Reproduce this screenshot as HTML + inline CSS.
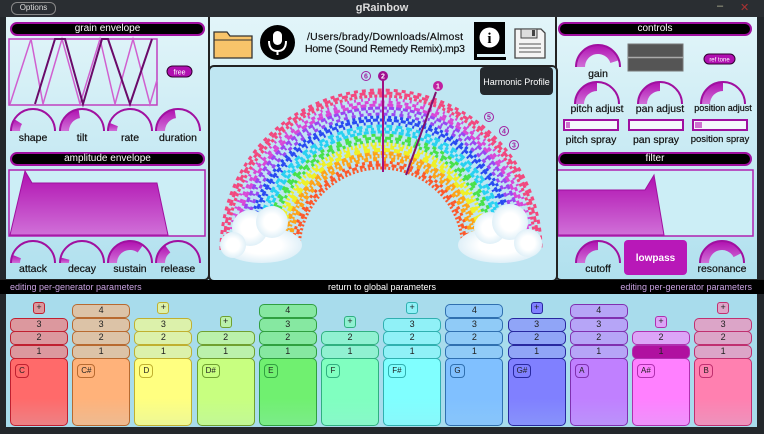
<!DOCTYPE html><html><head><meta charset="utf-8"><style>
*{margin:0;padding:0;box-sizing:border-box}
body{width:764px;height:434px;background:#23272b;font-family:"Liberation Sans",sans-serif;position:relative;overflow:hidden}
.abs{position:absolute}
.main{left:6px;top:17px;width:751px;height:263px;background:linear-gradient(#e2f5f9,#b0e0ee)}
.hdr{position:absolute;height:14px;background:#000;border:2px solid #a010a0;border-radius:7px;color:#fff;font-size:10px;text-align:center;line-height:10px}
.lbl{position:absolute;font-size:10.5px;color:#111;text-align:center;width:80px;white-space:nowrap;-webkit-text-stroke:0.2px #111}
.key{position:absolute;border-radius:5px;border:1.5px solid}
.row{position:absolute;border-radius:5px;border:1.5px solid;font-size:9px;text-align:center;line-height:11px;color:#222}
.nm{position:absolute;left:4px;top:5px;border:1.5px solid;border-radius:4px;font-size:8px;padding:0 3px;height:14px;line-height:11px;min-width:14px;text-align:center;color:#222}
.pl{position:absolute;width:12px;height:12px;border:1.5px solid;border-radius:3px;font-size:9px;line-height:9px;text-align:center;color:#222}
</style></head><body>
<div class="abs" style="left:0;top:0;width:764px;height:17px;background:#2a2e32"></div>
<div class="abs" style="left:11px;top:2px;width:45px;height:13px;border:1.5px solid #888;border-radius:6px;color:#ddd;font-size:8px;line-height:10px;text-align:center">Options</div>
<div class="abs" style="left:0;width:764px;top:2px;text-align:center;color:#ddd;font-size:11px;font-weight:bold">gRainbow</div>
<div class="abs" style="left:717px;top:0;color:#bb9;font-size:11px">–</div>
<div class="abs" style="left:740px;top:1px;color:#a33;font-size:11px">✕</div>
<div class="abs main"></div>
<div class="abs" style="left:0;top:17px;width:210px;height:264px;border-right:2px solid #222;border-bottom:2px solid #222;border-radius:0 0 6px 0"></div>
<div class="abs" style="left:555px;top:17px;width:209px;height:264px;border-left:2px solid #222;border-bottom:2px solid #222;border-radius:0 0 0 6px"></div>
<div class="hdr" style="left:10px;top:22px;width:195px">grain envelope</div>
<div class="hdr" style="left:10px;top:152px;width:195px">amplitude envelope</div>
<div class="hdr" style="left:558px;top:22px;width:194px">controls</div>
<div class="hdr" style="left:558px;top:152px;width:194px">filter</div>
<svg class="abs" style="left:0;top:0" width="764" height="434">
<defs>
<linearGradient id="mg" x1="0" y1="0" x2="0" y2="1"><stop offset="0" stop-color="#b010b0"/><stop offset="1" stop-color="#d070d8"/></linearGradient>
<radialGradient id="cl"><stop offset="0.5" stop-color="#fff"/><stop offset="1" stop-color="#e0f0f8"/></radialGradient>
</defs>
<rect x="9" y="39" width="148" height="66" fill="none" stroke="#c040c0" stroke-width="1.5"/>
<g fill="none" stroke-width="1.5">
<path d="M10 104 L31 39 L43 104 L62 39 L80 104 L100 39 L115 104 L133 39 L150 104 L157 80" stroke="#d060d0"/>
<path d="M35 104 L55 39 L65 39 L83 104 L102 39 L108 39 L130 104 L152 39" stroke="#6a0a6a" stroke-width="2"/>
</g>
<rect x="167" y="66" width="25" height="11" rx="5.5" fill="#b010b0" stroke="#300030"/>
<text x="179.5" y="74.5" font-size="7" fill="#fff" text-anchor="middle" font-family="Liberation Sans">free</text>
<rect x="9" y="170" width="196" height="66" fill="#cceef6" stroke="#b020b0" stroke-width="1.5"/>
<path d="M10 235 L25 171 L32 183 L157 183 L168 235 Z" fill="url(#mg)" stroke="#a010a0"/>
<rect x="557" y="170" width="196" height="66" fill="#cceef6" stroke="#b020b0" stroke-width="1.5"/>
<path d="M558 235 L558 190 L645 190 L654 175 L664 235 Z" fill="url(#mg)" stroke="#a010a0"/>
<rect x="628" y="44" width="55" height="27" fill="#555" stroke="#777"/>
<line x1="628" y1="57.5" x2="683" y2="57.5" stroke="#aaa" stroke-width="1.5"/>
<rect x="704" y="54" width="31" height="10" rx="5" fill="#b010b0" stroke="#300030"/>
<text x="719.5" y="61.5" font-size="6" fill="#fff" text-anchor="middle" font-family="Liberation Sans">ref tone</text>
<g fill="#f4f8fb" stroke="#a010a0" stroke-width="2">
<rect x="564" y="120" width="54" height="10"/><rect x="629" y="120" width="54" height="10"/><rect x="693" y="120" width="54" height="10"/>
</g>
<rect x="566" y="122" width="4" height="6" fill="#d070d0"/><rect x="695" y="122" width="7" height="6" fill="#d070d0"/>
<rect x="624" y="240" width="63" height="35" rx="4" fill="#b818b8"/>
<text x="655.5" y="261" font-size="10" fill="#fff" text-anchor="middle" font-weight="bold" font-family="Liberation Sans">lowpass</text>
<g id="knobs"></g>
<path d="M214 32 h13 l3 4 h22 v22 h-38 z" fill="#f8c46a" stroke="#333" stroke-width="1.3"/>
<line x1="214" y1="40" x2="252" y2="40" stroke="#333" stroke-width="1"/>
<circle cx="277.5" cy="42.5" r="17.5" fill="#000"/>
<rect x="273" y="31" width="9" height="14" rx="4.5" fill="#fff"/>
<path d="M269 41 q0 10 8.5 10 q8.5 0 8.5-10" fill="none" stroke="#fff" stroke-width="2"/>
<line x1="277.5" y1="51" x2="277.5" y2="55" stroke="#fff" stroke-width="2"/>
<text x="385" y="40" font-size="10.5" text-anchor="middle" font-family="Liberation Sans" fill="#111" stroke="#111" stroke-width="0.2" textLength="156">/Users/brady/Downloads/Almost</text>
<text x="385" y="52" font-size="10.5" text-anchor="middle" font-family="Liberation Sans" fill="#111" stroke="#111" stroke-width="0.2" textLength="160">Home (Sound Remedy Remix).mp3</text>
<path d="M474 22 h31 v32 h-31 z" fill="#000"/><path d="M474 54 v6 h32 v-3 h-29 v-3" fill="#000"/>
<circle cx="489.5" cy="37.5" r="10" fill="#fff"/><text x="489.5" y="43" font-size="15" text-anchor="middle" font-weight="bold" font-family="Liberation Serif">i</text>
<path d="M515 29 h26 l4 4 v25 h-30 z" fill="#f4f4f4" stroke="#444" stroke-width="1.3"/>
<rect x="521" y="29" width="16" height="9" fill="#ddd" stroke="#444"/><rect x="532" y="30" width="3" height="6" fill="#444"/>
<g stroke="#555"><line x1="519" y1="44" x2="541" y2="44"/><line x1="519" y1="48" x2="541" y2="48"/><line x1="519" y1="52" x2="541" y2="52"/></g>
<rect x="209" y="66" width="348" height="215" rx="5" fill="#bfe6f2" stroke="#222" stroke-width="2"/>
<rect x="480" y="67" width="73" height="28" rx="4" fill="#25292d"/>
<text x="516.5" y="85" font-size="9" fill="#fff" text-anchor="middle" font-family="Liberation Sans">Harmonic Profile</text>
<g fill="none" id="rb"></g>
<g fill="url(#cl)">
<ellipse cx="262" cy="245" rx="40" ry="18"/><circle cx="250" cy="228" r="18"/><circle cx="272" cy="222" r="16"/><circle cx="233" cy="245" r="13"/>
<ellipse cx="500" cy="245" rx="42" ry="18"/><circle cx="490" cy="228" r="16"/><circle cx="510" cy="222" r="18"/><circle cx="528" cy="243" r="14"/>
</g>
<line x1="383" y1="80" x2="383" y2="172" stroke="#a01080" stroke-width="2"/>
<line x1="436" y1="92" x2="406" y2="175" stroke="#801070" stroke-width="2"/>
<g font-size="7" font-weight="bold" text-anchor="middle" font-family="Liberation Sans">
<circle cx="383" cy="76" r="5" fill="#a01090"/><text x="383" y="78.5" fill="#fff">2</text>
<circle cx="438" cy="86" r="5" fill="#c020a0"/><text x="438" y="88.5" fill="#fff">1</text>
<g fill="none" stroke="#a020a0"><circle cx="366" cy="76" r="4.5"/><circle cx="489" cy="117" r="4.5"/><circle cx="504" cy="131" r="4.5"/><circle cx="514" cy="145" r="4.5"/></g>
<g fill="#a020a0"><text x="366" y="78.5">6</text><text x="489" y="119.5">5</text><text x="504" y="133.5">4</text><text x="514" y="147.5">3</text></g>
</g>
<rect x="0" y="280" width="764" height="14" fill="#000"/>
<rect x="6" y="294" width="751" height="133" fill="#a8dcec"/>
<text x="10" y="290" font-size="9" fill="#c8a0e0" font-family="Liberation Sans">editing per-generator parameters</text>
<text x="382" y="290" font-size="9" fill="#fff" text-anchor="middle" font-family="Liberation Sans">return to global parameters</text>
<text x="752" y="290" font-size="9" fill="#c8a0e0" text-anchor="end" font-family="Liberation Sans">editing per-generator parameters</text>
</svg>
<div id="lb"></div>
<div id="keys"></div>
<script>
var k=document.getElementById('knobs'),s='';
function knob(cx,cy,v){var r=22,ri=13;function p(a,rr){return [cx+rr*Math.cos(a),cy-rr*Math.sin(a)]}
var a=Math.PI*(1-v),o=p(a,r),i=p(a,ri);
s+='<path d="M'+(cx-r)+' '+cy+' A'+r+' '+r+' 0 0 1 '+o[0]+' '+o[1]+' L'+i[0]+' '+i[1]+' A'+ri+' '+ri+' 0 0 0 '+(cx-ri)+' '+cy+' Z" fill="url(#mg)"/>';
s+='<path d="M'+(cx-r)+' '+cy+' A'+r+' '+r+' 0 0 1 '+(cx+r)+' '+cy+'" fill="none" stroke="#a010a0" stroke-width="2"/>';}
[[33,.18],[82,.45],[130,.12],[178,.45]].forEach(function(q){knob(q[0],131,q[1])});
[[33,.12],[82,.08],[130,.7],[178,.3]].forEach(function(q){knob(q[0],263,q[1])});
knob(598,67,.9);knob(597,104,.5);knob(660,104,.5);knob(723,104,.5);knob(598,263,.5);knob(722,263,.85);
k.innerHTML=s;
var L='';function lab(x,y,t,f){L+='<div class="lbl" style="left:'+(x-40)+'px;top:'+y+'px'+(f?';font-size:'+f+'px':'')+'">'+t+'</div>'}
lab(33,132,'shape');lab(82,132,'tilt');lab(130,132,'rate');lab(178,132,'duration');
lab(33,263,'attack');lab(82,263,'decay');lab(130,263,'sustain');lab(178,263,'release');
lab(598,68,'gain');lab(597,103,'pitch adjust');lab(660,103,'pan adjust');lab(723,103,'position adjust',9);
lab(591,134,'pitch spray');lab(656,134,'pan spray');lab(720,134,'position spray',9.5);lab(598,263,'cutoff');lab(722,263,'resonance');
document.getElementById('lb').innerHTML=L;
var cols=['#ff5020','#ffa010','#f0f020','#40e040','#20d0f0','#2040f0','#9020f0','#e020d0','#ff2060'];
var rb='',cx=381,cy=250;
for(var b=0;b<cols.length;b++){for(var j=0;j<3;j++){var r=82+b*9+j*3;var d=(2+((b*7+j*3)%5))+' '+(2+((b*3+j)%4));
rb+='<path d="M'+(cx-r)+' '+cy+' A'+r+' '+r+' 0 0 1 '+(cx+r)+' '+cy+'" stroke="'+cols[b]+'" stroke-width="'+(b==1||b==2?4:3)+'" stroke-dasharray="'+d+'" opacity="'+(b>5?0.8:0.95)+'"/>';}}
document.getElementById('rb').innerHTML=rb;
var K=[['C','#ff6a6a','#c02030',3,0],['C#','#ffb27a','#b86a30',4,0],['D','#ffff80','#c0b030',3,0],['D#','#c8ff80','#70a030',2,0],['E','#70f070','#30a040',4,0],['F','#80ffc0','#30b080',2,0],['F#','#80ffff','#30b0b0',3,0],['G','#80c0ff','#3070b0',4,0],['G#','#8080ff','#2828a0',3,1],['A','#c080ff','#8030b0',4,0],['A#','#ff80ff','#b030b0',2,2],['B','#ff80b0','#c03070',3,0]];
var h='';
K.forEach(function(q,i){var x=10+i*62.2,w=58;
h+='<div class="key" style="left:'+x+'px;top:358px;width:'+w+'px;height:68px;background:linear-gradient('+q[1]+','+q[1]+' 60%,'+q[1]+'cc);border-color:'+q[2]+'"><div class="nm" style="border-color:'+q[2]+';background:'+q[1]+'">'+q[0]+'</div></div>';
var ys=[345,331,318,304];
for(var r=0;r<q[3];r++){var sel=(q[4]==2&&r==0);h+='<div class="row" style="left:'+x+'px;top:'+ys[r]+'px;width:'+w+'px;height:14px;border-color:'+q[2]+';background:'+(sel?'#b010a0':q[1]+'99')+'">'+(r+1)+'</div>';}
if(q[3]<4){var py=ys[q[3]]-2;h+='<div class="pl" style="left:'+(x+23)+'px;top:'+py+'px;border-color:'+q[2]+';background:'+(q[4]==1?q[1]:q[1]+'99')+'">+</div>';}
});
document.getElementById('keys').innerHTML=h;
</script>
</body></html>
